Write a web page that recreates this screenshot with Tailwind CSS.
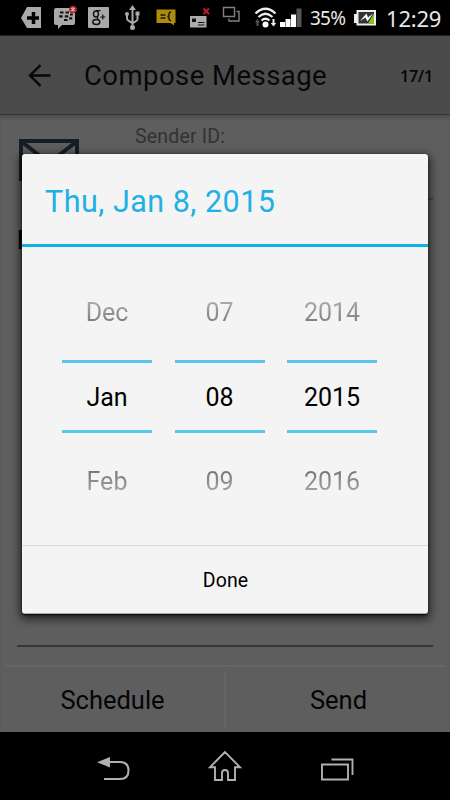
<!DOCTYPE html>
<html lang="en">
<head>
    <meta charset="utf-8">
    <title>Compose Message</title>
    <script src="https://cdn.jsdelivr.net/npm/@tailwindcss/browser@4"></script>
</head>
<body class="bg-black">
<div class="relative flex flex-col w-[450px] h-[800px] overflow-hidden bg-black font-[Roboto,sans-serif] text-black whitespace-nowrap">

    <!-- status bar -->
    <div class="flex h-9 shrink-0 pl-[18px] border-b border-[#252525]">
        <svg class="w-[31px] h-9" viewBox="18 0 31 36"><path d="M27 7h14v21H27l-6-10z" fill="#a9a9a9"/><path d="M33.500 12v12M27 18h12" stroke="#000" stroke-width="3.500"/></svg>
        <svg class="w-[34px] h-9" viewBox="49 0 34 36">
            <path d="M56 8h17q2 0 2 2v13q0 2-2 2H62l-4 4v-4h-2q-2 0-2-2V10q0-2 2-2z" fill="#a9a9a9"/>
            <g stroke="#111" stroke-width="2.200"><path d="M60 12.500h3.500M65.500 12.500h3.500M59.200 16.300h3.500M64.800 16.300h3.500M70 14.500h2.800M64 20h3.500M69.200 18.300h3"/></g>
            <circle cx="73" cy="9.500" r="3.800" fill="#b3202b"/><path d="M73 7v5M71 8.200l4 2.600M75 8.200l-4 2.600" stroke="#ddd" stroke-width=".8"/>
        </svg>
        <svg class="w-[36px] h-9" viewBox="83 0 36 36">
            <rect x="88" y="7" width="21" height="21" rx="1" fill="#a9a9a9"/>
            <g fill="none" stroke="#111"><ellipse cx="96" cy="14" rx="2.500" ry="3" stroke-width="1.400"/><path d="M96 10.700h4.500M98 16.500q-1.500 1.500 .500 2.700" stroke-width="1.200"/><ellipse cx="96.300" cy="22" rx="3.500" ry="2.500" stroke-width="1.400"/><path d="M102.800 14.500v5M100.300 17h5" stroke-width="1.200"/></g>
        </svg>
        <svg class="w-[32px] h-9" viewBox="119 0 32 36">
            <g fill="none" stroke="#a9a9a9" stroke-width="2"><path d="M132.500 8v19M127 15v3.500q0 2 5.500 4.500M137.500 14v5q0 2-5 4"/></g>
            <g fill="#a9a9a9"><path d="M132.500 5l3.500 5h-7z"/><circle cx="127" cy="14" r="2"/><path d="M135.500 11.500h4v4h-4z"/><circle cx="132.500" cy="27.500" r="2.500"/></g>
        </svg>
        <svg class="w-[32px] h-9" viewBox="151 0 32 36">
            <path d="M156.500 9.500h19v13.500h-1.500v2.500l-3.500-2.500h-14z" fill="#ad8c0c"/>
            <path d="M160.500 15h5M160.500 18h5M171 12q-2 0-2 2.500t-1.500 2q1.500 0 1.500 2t2 2" fill="none" stroke="#1c1800" stroke-width="1.500"/>
        </svg>
        <svg class="w-[37px] h-9" viewBox="183 0 37 36">
            <path d="M190 16h16.500v11.500H190z" fill="#adadad"/><path d="M192 18.500h4v3.500h-4z" fill="#111"/><path d="M198 22.500h6.500M198 25h6.500" stroke="#111" stroke-width="1.200"/>
            <path d="M203.500 8.500l5.500 5.500M209 8.500l-5.500 5.500" stroke="#c8161d" stroke-width="1.900"/>
        </svg>
        <svg class="w-[32px] h-9" viewBox="220 0 32 36"><path d="M223.500 7.500h11v9h-11zM236.500 11.500h2.500v9.500h-10v-2.500" fill="none" stroke="#808080" stroke-width="1.400"/></svg>
        <svg class="w-[27px] h-9" viewBox="252 0 27 36">
            <g fill="none" stroke="#eee" stroke-width="2.200"><path d="M255.500 13.500q10-9.500 20 0M258.500 17q7-6.500 14 0M261.500 20.500q4-3.500 8 0"/></g>
            <circle cx="265.500" cy="24.500" r="3" fill="#fff"/>
            <path d="M257.500 19l2.500 3.500h-1.500V26h-2v-3.500H255z" fill="#555"/><path d="M273.500 26.500l-2.800-3.500h1.800v-4h2v4h1.800z" fill="#eee"/>
        </svg>
        <svg class="w-[30px] h-9" viewBox="279 0 30 36"><path d="M280 22h5v5h-5zM285.500 19h5v8h-5zM291 14.500h5V27h-5z" fill="#fff"/><path d="M296.500 8.500h5V27h-5z" fill="#555"/></svg>
        <div class="w-[45px] h-9 pl-px leading-[37px] text-[19px] text-[#e8e8e8] font-['Noto_Sans',sans-serif] tracking-[-0.8px]">35%</div>
        <svg class="w-[32px] h-9" viewBox="354 0 32 36">
            <path d="M356.500 10H376v15.500h-19.500V23H354v-9h2.500z" fill="#eee"/><path d="M358.500 12h15.500v11.500h-15.500z" fill="#333"/><path d="M368 23.500l6-10v10z" fill="#8dc21f"/>
            <path d="M360 21l6.500-7.500 1.500 4 5-4-5.500 8-2-4z" fill="#fff"/>
        </svg>
        <div class="h-9 leading-9 text-[22px] text-[#e8e8e8] font-['Noto_Sans',sans-serif] tracking-[-0.2px]">12:29</div>
    </div>

    <!-- action bar -->
    <div class="flex items-center h-[79px] shrink-0 pl-[28px] pr-[17px] bg-[#4b4b4b] border-b border-[#353535] text-[#080808]">
        <svg class="w-[23px] h-[23px]" viewBox="0 0 23 23" fill="none" stroke="#080808" stroke-width="2.400"><path d="M22.500 11.500h-20M12.500 1.200L2 11.500l10.500 10.300"/></svg>
        <div class="ml-[33px] pt-[2px] text-[27.500px] tracking-[0.45px]">Compose Message</div>
        <div class="ml-auto pt-px text-[16px] font-semibold font-['Noto_Sans',sans-serif] tracking-[-0.2px]">17/1</div>
    </div>

    <!-- dimmed form behind the dialog -->
    <div class="flex flex-col h-[617px] shrink-0 bg-[#5e5e5e] shadow-[inset_0_4px_4px_-2px_#4a4a4a]">
        <div class="flex h-[85px] pl-[19px] pr-[17px]">
            <svg class="w-[60px] h-[42px] mt-6" viewBox="0 0 60 42"><path d="M2 2h56v38H2zM3 3l27 21L57 3" fill="none" stroke="#161d26" stroke-width="4"/></svg>
            <div class="flex-1 ml-[56px] pt-[8px] text-[19.500px] leading-[28px] text-[#323232] tracking-[0.2px] border-b-2 border-[#4a4a4a]">Sender ID:</div>
        </div>
        <div class="pl-[17px] mt-[27px] h-[28px] leading-[28px] text-[25px] font-medium">Message</div>
        <div class="mx-[17px] mt-[390px] border-b-2 border-[#373737]"></div>
        <div class="flex mx-[5px] mt-[18px] h-[67px] border-t-2 border-[#666] text-[25.500px] leading-[67px] text-center text-[#050505]">
            <div class="w-[219px] pr-1">Schedule</div>
            <div class="w-[2px] h-[57px] mt-[4px] bg-[#656565]"></div>
            <div class="flex-1 pl-[6px]">Send</div>
        </div>
    </div>

    <!-- navigation bar -->
    <div class="flex justify-between h-[68px] shrink-0 px-[96px]">
        <svg class="w-[36px] h-[68px]" viewBox="96 732 36 68"><path d="M109 762h11q8.500 0 8.500 8.500t-8.500 8.500h-16" fill="none" stroke="#b0b0b0" stroke-width="2"/><path d="M97 762.300l13-5.300v10.500z" fill="#b0b0b0"/></svg>
        <svg class="w-[36px] h-[68px]" viewBox="207 732 36 68"><path d="M225 752l-15 15.300h5V780h7v-7q0-3 3-3t3 3v7h7v-12.700h5z" fill="none" stroke="#b0b0b0" stroke-width="1.900"/></svg>
        <svg class="w-[36px] h-[68px]" viewBox="318.500 732 36 68"><path d="M322.500 764.500h26V779.500h-26zM332 759.500h21V775" fill="none" stroke="#b0b0b0" stroke-width="1.900"/></svg>
    </div>

    <!-- date dialog -->
    <div class="absolute left-[22px] top-[154px] flex flex-col w-[406px] h-[460px] rounded-[3px] bg-[#f4f4f4] border-b border-[#aaa] shadow-[0_3px_10px_2px_rgba(0,0,0,0.65),0_1px_2px_rgba(0,0,0,0.8)]">
        <div class="h-[93px] pl-[23px] leading-[95px] text-[30.500px] tracking-[0.5px] text-[#20b1e4] border-b-3 border-[#0fb0e4]">Thu, Jan 8, 2015</div>
        <div class="flex h-[298px] pl-[40px] gap-[22.5px] text-[25px] text-center">
            <div class="w-[90px] pt-[24px]">
                <div class="h-[89px] leading-[84px] text-transparent bg-clip-text bg-linear-to-b from-[#b4b4b4] from-30% to-[#707070] to-65%">Dec</div>
                <div class="h-[73px] leading-[70px] border-y-3 border-[#5bc6ec]">Jan</div>
                <div class="h-[100px] leading-[97px] text-transparent bg-clip-text bg-linear-to-b from-[#707070] from-35% to-[#b4b4b4] to-65%">Feb</div>
            </div>
            <div class="w-[90px] pt-[24px]">
                <div class="h-[89px] leading-[84px] text-transparent bg-clip-text bg-linear-to-b from-[#b4b4b4] from-30% to-[#707070] to-65%">07</div>
                <div class="h-[73px] leading-[70px] border-y-3 border-[#5bc6ec]">08</div>
                <div class="h-[100px] leading-[97px] text-transparent bg-clip-text bg-linear-to-b from-[#707070] from-35% to-[#b4b4b4] to-65%">09</div>
            </div>
            <div class="w-[90px] pt-[24px]">
                <div class="h-[89px] leading-[84px] text-transparent bg-clip-text bg-linear-to-b from-[#b4b4b4] from-30% to-[#707070] to-65%">2014</div>
                <div class="h-[73px] leading-[70px] border-y-3 border-[#5bc6ec]">2015</div>
                <div class="h-[100px] leading-[97px] text-transparent bg-clip-text bg-linear-to-b from-[#707070] from-35% to-[#b4b4b4] to-65%">2016</div>
            </div>
        </div>
        <button class="flex-1 pt-[3px] pl-px text-[19.500px] tracking-[0.1px] border-t border-[#d8d8d8]">Done</button>
    </div>
</div>
</body>
</html>
